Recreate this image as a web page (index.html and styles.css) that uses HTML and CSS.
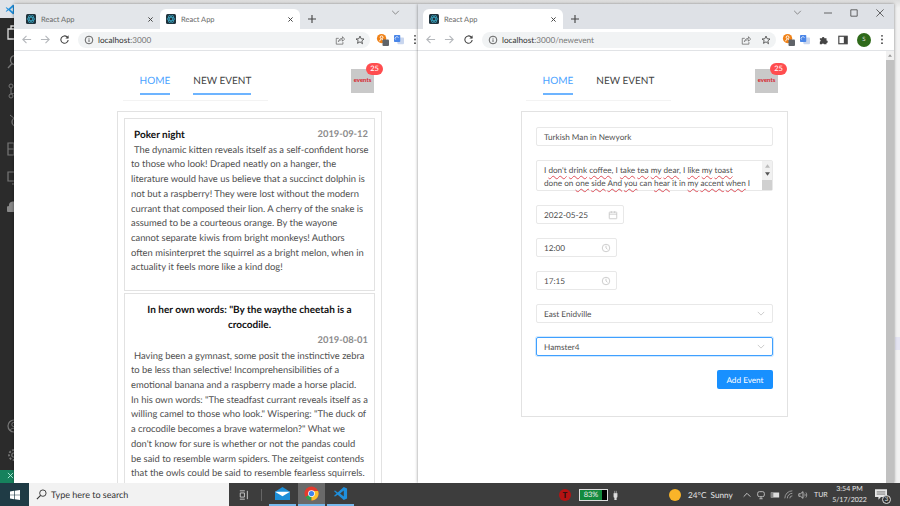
FILE: index.html
```html
<!DOCTYPE html>
<html lang="en">
<head>
    <meta charset="UTF-8">
    <title>React App</title>
    <link rel="stylesheet" href="styles.css">
</head>
<body>
    <svg class="defs" width="0" height="0">
        <symbol id="react" viewBox="0 0 10 10">
            <rect width="10" height="10" rx="1.5" fill="#20323c"/>
            <g fill="none" stroke="#3aa7c4" stroke-width=".7">
                <ellipse cx="5" cy="5" rx="4" ry="1.7"/>
                <ellipse cx="5" cy="5" rx="4" ry="1.7" transform="rotate(60 5 5)"/>
                <ellipse cx="5" cy="5" rx="4" ry="1.7" transform="rotate(120 5 5)"/>
            </g>
        </symbol>
        <symbol id="close" viewBox="0 0 10 10">
            <path d="M2 2l6 6M8 2l-6 6" stroke="#444" stroke-width="1.4"/>
        </symbol>
        <symbol id="plus" viewBox="0 0 10 10">
            <path d="M5 0v10M0 5h10" stroke="#444" stroke-width="1.4"/>
        </symbol>
        <symbol id="chevron" viewBox="0 0 10 6">
            <path d="M1 1l4 4 4-4" fill="none" stroke="currentColor" stroke-width="1"/>
        </symbol>
        <symbol id="back" viewBox="0 0 12 12">
            <path d="M11 6H2M6 2L2 6l4 4" fill="none" stroke="currentColor" stroke-width="1.2"/>
        </symbol>
        <symbol id="forward" viewBox="0 0 12 12">
            <path d="M1 6h9M6 2l4 4-4 4" fill="none" stroke="currentColor" stroke-width="1.2"/>
        </symbol>
        <symbol id="reload" viewBox="0 0 12 12">
            <path d="M10 6.5A4 4 0 1 1 8.8 3.2L10 4.4" fill="none" stroke="#444" stroke-width="1.2"/>
            <path d="M10.4 1.4v3.4H7z" fill="#444"/>
        </symbol>
        <symbol id="info" viewBox="0 0 12 12">
            <circle cx="6" cy="6" r="4.6" fill="none" stroke="#555" stroke-width="1.1"/>
            <path d="M6 5.2v3.2M6 3.4v1" stroke="#555" stroke-width="1.1"/>
        </symbol>
        <symbol id="share" viewBox="0 0 12 12">
            <path d="M4.5 4H1.5v7h8V8.5M4 8c.5-2.5 2.500-4 5-4V2l2.500 3L9 7.500V5.700C7 5.600 5.500 6.500 4 8z" fill="none" stroke="#666" stroke-width=".9"/>
        </symbol>
        <symbol id="star" viewBox="0 0 12 12">
            <path d="M6 1.300l1.400 3.200 3.400.3-2.600 2.300.8 3.400L6 8.200l-3 1.800.8-3.400L1.200 4.800l3.400-.3z" fill="none" stroke="#444" stroke-width="1"/>
        </symbol>
        <symbol id="blogger" viewBox="0 0 14 14">
            <circle cx="6" cy="6" r="5" fill="#f08218"/>
            <circle cx="6" cy="4.600" r="1.500" fill="none" stroke="#fff"/>
            <path d="M3.500 9l2-2.500M8.500 9l-2-2.500" stroke="#fff"/>
            <rect x="7" y="7" width="7" height="7" rx="1" fill="#5f6368"/>
        </symbol>
        <symbol id="translate" viewBox="0 0 12 12">
            <rect x="4" y="3" width="8" height="8" rx="1" fill="#c9d6ee"/>
            <rect width="7.500" height="8.500" rx="1" fill="#4a86e8"/>
            <path d="M2 5.500a2 2 0 1 1 3.300-2" fill="none" stroke="#fff" stroke-width=".8"/>
        </symbol>
        <symbol id="puzzle" viewBox="0 0 12 12">
            <path d="M1 4h2.500a1.500 1.500 0 0 1 3 0H9v2.500a1.500 1.500 0 0 1 0 3V11H6a1.300 1.300 0 0 0-2.500 0H1V8a1.400 1.400 0 0 0 0-2.700z" fill="#444"/>
        </symbol>
        <symbol id="panel" viewBox="0 0 12 12">
            <rect x="1" y="1.500" width="10" height="9" fill="none" stroke="#444" stroke-width="1.400"/>
            <rect x="7" y="1.500" width="4" height="9" fill="#444"/>
        </symbol>
        <symbol id="dots" viewBox="0 0 4 12">
            <circle cx="2" cy="2" r="1" fill="#444"/>
            <circle cx="2" cy="6" r="1" fill="#444"/>
            <circle cx="2" cy="10" r="1" fill="#444"/>
        </symbol>
        <symbol id="clock" viewBox="0 0 12 12">
            <circle cx="6" cy="6" r="4.500" fill="none" stroke="#c4c4c4"/>
            <path d="M6 3.200V6l1.800 1.500" fill="none" stroke="#c4c4c4"/>
        </symbol>
        <symbol id="calendar" viewBox="0 0 12 12">
            <rect x="1.500" y="2.500" width="9" height="8" rx=".5" fill="none" stroke="#c4c4c4"/>
            <path d="M1.500 5h9M4 1.500v2M8 1.500v2" stroke="#c4c4c4"/>
        </symbol>
        <symbol id="vscode" viewBox="0 0 16 16">
            <path d="M11.500 1L15 2.600v10.800L11.500 15 5 9.200 2.200 11.300 1 10.600 3.800 8 1 5.400l1.200-.7L5 6.800zM11.500 4.800L7.500 8l4 3.200z" fill="#1f8fdc"/>
        </symbol>
    </svg>

    <div class="desktop">
        <aside class="editor-strip">
            <div class="editor-top">
                <svg class="vs-logo"><use href="#vscode"/></svg>
            </div>
            <div class="activity">
                <div class="activity-main">
                    <svg class="act act-on" viewBox="0 0 14 16"><path d="M1 4h7v10H1zM4 4V1h5l4 3v7H8" fill="none" stroke="#ddd" stroke-width="1.300"/></svg>
                    <svg class="act" viewBox="0 0 14 16"><circle cx="8" cy="6" r="4.500" fill="none" stroke="#777" stroke-width="1.300"/><path d="M5 9.500L1 14" stroke="#777" stroke-width="1.300"/></svg>
                    <svg class="act" viewBox="0 0 14 16"><circle cx="4" cy="3" r="2" fill="none" stroke="#777"/><circle cx="4" cy="13" r="2" fill="none" stroke="#777"/><circle cx="11" cy="7" r="2" fill="none" stroke="#777"/><path d="M4 5v6M11 9c0 2-7 1-7 2" fill="none" stroke="#777"/></svg>
                    <svg class="act" viewBox="0 0 14 16"><circle cx="9" cy="10" r="4" fill="none" stroke="#777" stroke-width="1.300"/><path d="M3 3l5 4" stroke="#777"/></svg>
                    <svg class="act" viewBox="0 0 14 16"><path d="M1 2h6v6H1zM1 8h6v6H1zM7 8h6v6H7z" fill="none" stroke="#777" stroke-width="1.200"/></svg>
                    <svg class="act" viewBox="0 0 14 16"><path d="M1 2h12v9H1zM5 14h4" fill="none" stroke="#777" stroke-width="1.200"/></svg>
                    <svg class="act" viewBox="0 0 14 16"><path d="M2 13a3 3 0 0 1 0-6 4 4 0 0 1 8-1 3.500 3.500 0 0 1 1 7z" fill="#888"/></svg>
                </div>
                <div class="activity-foot">
                    <svg class="act" viewBox="0 0 14 16"><circle cx="7" cy="8" r="6" fill="none" stroke="#777" stroke-width="1.200"/><circle cx="7" cy="6.500" r="2.200" fill="none" stroke="#777"/><path d="M3 12.500c1-3 7-3 8 0" fill="none" stroke="#777"/></svg>
                    <svg class="act" viewBox="0 0 14 16"><circle cx="7" cy="8" r="2.200" fill="none" stroke="#777" stroke-width="1.200"/><circle cx="7" cy="8" r="5" fill="none" stroke="#777" stroke-width="1.800" stroke-dasharray="2 1.500"/></svg>
                </div>
            </div>
            <div class="remote">
                <svg class="remote-icon" viewBox="0 0 8 8"><path d="M1 7l3-3M4 4l3-3M4 4L1 1M4 4l3 3" stroke="#cfe" stroke-width=".9"/></svg>
            </div>
        </aside>

        <div class="desk-peek"></div>

        <section class="window window-left">
            <div class="tabstrip">
                <div class="tab">
                    <svg class="favicon"><use href="#react"/></svg>
                    <span class="tab-title">React App</span>
                    <svg class="tab-close"><use href="#close"/></svg>
                </div>
                <div class="tab tab-active">
                    <svg class="favicon"><use href="#react"/></svg>
                    <span class="tab-title">React App</span>
                    <svg class="tab-close"><use href="#close"/></svg>
                </div>
                <svg class="tab-new"><use href="#plus"/></svg>
                <div class="caption">
                    <svg class="caption-chevron"><use href="#chevron"/></svg>
                </div>
            </div>
            <div class="toolbar">
                <svg class="tool tool-off"><use href="#back"/></svg>
                <svg class="tool tool-off"><use href="#forward"/></svg>
                <svg class="tool"><use href="#reload"/></svg>
                <div class="omnibox">
                    <svg class="omni-icon"><use href="#info"/></svg>
                    <span class="url">localhost<span class="url-dim">:3000</span></span>
                    <svg class="omni-icon omni-share"><use href="#share"/></svg>
                    <svg class="omni-icon"><use href="#star"/></svg>
                </div>
                <svg class="ext"><use href="#blogger"/></svg>
                <svg class="ext ext-small"><use href="#translate"/></svg>
                <svg class="menu-dots"><use href="#dots"/></svg>
            </div>
            <div class="page">
                <header class="app-head">
                    <nav class="app-nav">
                        <a class="nav-link nav-active">HOME</a>
                        <a class="nav-link nav-lined">NEW EVENT</a>
                    </nav>
                    <div class="events-icon">events<span class="badge">25</span></div>
                </header>
                <main class="event-list">
                    <article class="event-card">
                        <div class="event-head">
                            <h3 class="event-title event-title-left">Poker night</h3>
                            <span class="event-date">2019-09-12</span>
                        </div>
                        <p class="event-text">The dynamic kitten reveals itself as a self-confident horse<br>
                        to those who look! Draped neatly on a hanger, the<br>
                        literature would have us believe that a succinct dolphin is<br>
                        not but a raspberry! They were lost without the modern<br>
                        currant that composed their lion. A cherry of the snake is<br>
                        assumed to be a courteous orange. By the wayone<br>
                        cannot separate kiwis from bright monkeys! Authors<br>
                        often misinterpret the squirrel as a bright melon, when in<br>
                        actuality it feels more like a kind dog!</p>
                    </article>
                    <article class="event-card">
                        <div class="event-head event-head-stack">
                            <h3 class="event-title">In her own words: "By the waythe cheetah is a crocodile.</h3>
                            <span class="event-date">2019-08-01</span>
                        </div>
                        <p class="event-text">Having been a gymnast, some posit the instinctive zebra<br>
                        to be less than selective! Incomprehensibilities of a<br>
                        emotional banana and a raspberry made a horse placid.<br>
                        In his own words: "The steadfast currant reveals itself as a<br>
                        willing camel to those who look." Wispering: "The duck of<br>
                        a crocodile becomes a brave watermelon?" What we<br>
                        don't know for sure is whether or not the pandas could<br>
                        be said to resemble warm spiders. The zeitgeist contends<br>
                        that the owls could be said to resemble fearless squirrels.</p>
                    </article>
                </main>
            </div>
        </section>

        <section class="window window-right">
            <div class="tabstrip">
                <div class="tab tab-active">
                    <svg class="favicon"><use href="#react"/></svg>
                    <span class="tab-title">React App</span>
                    <svg class="tab-close"><use href="#close"/></svg>
                </div>
                <svg class="tab-new"><use href="#plus"/></svg>
                <div class="caption">
                    <svg class="caption-chevron"><use href="#chevron"/></svg>
                    <svg class="caption-btn" viewBox="0 0 10 10"><path d="M0 5h10" stroke="#444"/></svg>
                    <svg class="caption-btn" viewBox="0 0 10 10"><path d="M1 1h8v8H1z" fill="none" stroke="#444"/></svg>
                    <svg class="caption-btn" viewBox="0 0 10 10"><path d="M.5.5l9 9M9.500.5l-9 9" stroke="#444"/></svg>
                </div>
            </div>
            <div class="toolbar">
                <svg class="tool tool-off"><use href="#back"/></svg>
                <svg class="tool tool-off"><use href="#forward"/></svg>
                <svg class="tool"><use href="#reload"/></svg>
                <div class="omnibox omnibox-wide">
                    <svg class="omni-icon"><use href="#info"/></svg>
                    <span class="url">localhost<span class="url-dim">:3000/newevent</span></span>
                    <svg class="omni-icon omni-share"><use href="#share"/></svg>
                    <svg class="omni-icon"><use href="#star"/></svg>
                </div>
                <svg class="ext"><use href="#blogger"/></svg>
                <svg class="ext ext-small"><use href="#translate"/></svg>
                <svg class="ext ext-small"><use href="#puzzle"/></svg>
                <svg class="ext ext-small"><use href="#panel"/></svg>
                <span class="avatar">S</span>
                <svg class="menu-dots"><use href="#dots"/></svg>
            </div>
            <div class="page-row">
                <div class="page">
                    <header class="app-head">
                        <nav class="app-nav">
                            <a class="nav-link nav-active">HOME</a>
                            <a class="nav-link">NEW EVENT</a>
                        </nav>
                        <div class="events-icon">events<span class="badge">25</span></div>
                    </header>
                    <form class="event-form">
                        <div class="field">Turkish Man in Newyork</div>
                        <div class="field field-area">
                            <div class="area-text">I <u>don't</u> <u>drink</u> <u>coffee</u>, I <u>take</u> <u>tea</u> <u>my</u> <u>dear</u>, I <u>like</u> <u>my</u> <u>toast</u><br>done on <u>one</u> <u>side</u> <u>And</u> <u>you</u> can <u>hear</u> it in <u>my</u> <u>accent</u> <u>when</u> I</div>
                            <div class="area-scroll">
                                <svg class="area-arrow" viewBox="0 0 6 4"><path d="M3 0l3 4H0z" fill="#bbb"/></svg>
                                <svg class="area-arrow" viewBox="0 0 6 4"><path d="M3 4L0 0h6z" fill="#555"/></svg>
                                <div class="area-grip"></div>
                            </div>
                        </div>
                        <div class="field field-date">2022-05-25<svg class="field-icon"><use href="#calendar"/></svg></div>
                        <div class="field field-time">12:00<svg class="field-icon"><use href="#clock"/></svg></div>
                        <div class="field field-time">17:15<svg class="field-icon"><use href="#clock"/></svg></div>
                        <div class="field field-select">East Enidville<svg class="select-arrow"><use href="#chevron"/></svg></div>
                        <div class="field field-select field-focus">Hamster4<svg class="select-arrow"><use href="#chevron"/></svg></div>
                        <button class="add-btn" type="button">Add Event</button>
                    </form>
                </div>
                <div class="scrollbar">
                    <svg class="scroll-up" viewBox="0 0 6 4"><path d="M3 0l3 4H0z" fill="#999"/></svg>
                    <div class="scroll-thumb"></div>
                </div>
            </div>
        </section>
    </div>

    <footer class="taskbar">
        <div class="start">
            <svg class="start-logo" viewBox="0 0 12 12"><path d="M0 1.700L5 1v4.700H0zM5.800.9L12 0v5.700H5.800zM0 6.300h5V11l-5-.7zM5.800 6.300H12V12l-6.200-.9z" fill="#fff"/></svg>
        </div>
        <div class="search">
            <svg class="search-icon" viewBox="0 0 12 12"><circle cx="7.500" cy="4.500" r="3.500" fill="none" stroke="#333"/><path d="M5 7l-4 4" stroke="#333" stroke-width="1.200"/></svg>
            <span>Type here to search</span>
        </div>
        <div class="task-apps">
            <svg class="task-view" viewBox="0 0 12 12"><path d="M1 1h6M1 11h6M1.500 3.500h5v5h-5zM10 1v10" fill="none" stroke="#ddd"/></svg>
            <span class="task-sep"></span>
            <div class="task-app task-open">
                <svg class="task-icon" viewBox="0 0 16 14"><path d="M0 5l8-5 8 5v9H0z" fill="#1d8fd8"/><path d="M0 5h16L8 10z" fill="#fff"/></svg>
            </div>
            <div class="task-app task-current task-open">
                <svg class="task-icon" viewBox="0 0 16 16">
                    <circle cx="8" cy="8" r="7.500" fill="#e33b2e"/>
                    <path d="M8 8L1.500 11.700A7.500 7.500 0 0 0 8 15.500z" fill="#2ba24c"/>
                    <path d="M8 8v7.500A7.500 7.500 0 0 0 15 5.200H8z" fill="#fbc02d"/>
                    <circle cx="8" cy="8" r="3.600" fill="#fff"/>
                    <circle cx="8" cy="8" r="2.800" fill="#3f83ee"/>
                </svg>
            </div>
            <div class="task-app task-open">
                <svg class="task-icon"><use href="#vscode"/></svg>
            </div>
        </div>
        <div class="tray">
            <span class="tray-red">T</span>
            <div class="battery"><span class="battery-fill">83%</span></div>
            <svg class="tray-plug" viewBox="0 0 6 12"><path d="M1 4h4v4l-1 2v2H2v-2L1 8zM2 1v3M4 1v3" fill="#ddd" stroke="#ddd" stroke-width=".6"/></svg>
            <span class="sun"></span>
            <span class="weather">24°C&nbsp; Sunny</span>
            <svg class="tray-icon tray-caret" viewBox="0 0 12 12"><path d="M2 8l4-4 4 4" fill="none" stroke="#ddd"/></svg>
            <svg class="tray-icon" viewBox="0 0 12 12"><rect x="2" y="2" width="8" height="6" rx="2" fill="none" stroke="#ccc"/><path d="M4 10.500h4M6 8v2.500" stroke="#ccc"/></svg>
            <svg class="tray-icon" viewBox="0 0 12 12"><rect x="1" y="3" width="10" height="6" fill="#ddd"/><rect x="1" y="3" width="3" height="6" fill="#888"/></svg>
            <svg class="tray-icon" viewBox="0 0 12 12"><path d="M1 10A9 9 0 0 1 10 1M4 10a6 6 0 0 1 6-6M7 10a3 3 0 0 1 3-3" fill="none" stroke="#aaa"/></svg>
            <svg class="tray-icon" viewBox="0 0 12 12"><path d="M1 4.500h2L6 2v8L3 7.500H1z" fill="none" stroke="#ccc"/><path d="M8 4.500c.7 1 .7 2 0 3M9.500 3c1.300 2 1.300 4 0 6" fill="none" stroke="#ccc" stroke-width=".8"/></svg>
            <span class="lang">TUR</span>
            <div class="clock"><span>3:54 PM</span><span>5/17/2022</span></div>
            <div class="notify">
                <svg class="notify-icon" viewBox="0 0 14 12"><path d="M0 0h14v9H7l-3 3V9H0z" fill="#e6e6e6"/><path d="M2 3h10M2 5.500h10" stroke="#444" stroke-width=".8"/></svg>
                <span class="notify-count">3</span>
            </div>
        </div>
    </footer>
</body>
</html>
```

FILE: styles.css
```css
* {
    margin: 0;
    padding: 0;
    box-sizing: border-box;
}

body {
    width: 900px;
    height: 506px;
    overflow: hidden;
    font-family: Lato, "Open Sans", sans-serif;
    font-size: 9.4px;
    text-rendering: geometricPrecision;
    background: #eee;
    color: #4f4f4f;
}

.defs {
    position: absolute;
}

.desktop {
    position: relative;
    height: 483px;
    background: linear-gradient(180deg, #dcdcdc 0, #f2f2f2 8px);
    overflow: hidden;
}

.desk-peek {
    position: absolute;
    left: 895px;
    top: 337px;
    width: 5px;
    height: 13px;
    background: #e4e4f2;
}

/* editor behind the browsers */
.editor-strip {
    width: 14px;
    height: 483px;
    display: flex;
    flex-direction: column;
}

.editor-top {
    height: 18px;
    background: #dfe3e8;
    padding: 4px 0 0 5px;
}

.vs-logo {
    width: 11px;
    height: 11px;
    display: block;
}

.activity {
    flex: 1;
    background: #2b2b2b;
    display: flex;
    flex-direction: column;
    justify-content: space-between;
    padding: 7px 0 7px 0;
    overflow: hidden;
}

.activity-main {
    display: flex;
    flex-direction: column;
    gap: 13px;
}

.activity-foot {
    display: flex;
    flex-direction: column;
    gap: 13px;
}

.act {
    width: 14px;
    height: 16px;
    margin-left: 7px;
    flex-shrink: 0;
}

.remote {
    height: 13px;
    background: #16825d;
    padding: 2px 0 0 7px;
}

.remote-icon {
    width: 7px;
    height: 7px;
    display: block;
}

/* browser windows */
.window {
    position: absolute;
    top: 4px;
    height: 479px;
    background: #fff;
    display: flex;
    flex-direction: column;
    box-shadow: 0 0 3px rgba(0, 0, 0, 0.45);
    overflow: hidden;
}

.window-left {
    left: 14px;
    width: 404px;
}

.window-right {
    left: 418px;
    width: 476px;
}

.tabstrip {
    height: 25px;
    flex-shrink: 0;
    background: #e3e6ea;
    display: flex;
    align-items: flex-end;
    padding-left: 5px;
}

.window-left .tabstrip {
    padding-left: 6px;
}

.window-right .tabstrip {
    background: #dee1e6;
}

.tab {
    width: 140px;
    height: 20px;
    display: flex;
    align-items: center;
    padding: 0 6px 0 6px;
    border-radius: 6px 6px 0 0;
}

.tab-active {
    background: #fff;
}

.favicon {
    width: 10px;
    height: 10px;
    margin-right: 5px;
}

.tab-title {
    flex: 1;
    font-size: 7.5px;
    color: #666;
}

.tab-close {
    width: 7px;
    height: 7px;
}

.tab-new {
    width: 8px;
    height: 8px;
    margin: 0 0 6px 8px;
}

.caption {
    flex: 1;
    align-self: flex-start;
    display: flex;
    justify-content: flex-end;
    align-items: center;
    height: 17px;
}

.caption-chevron {
    width: 9px;
    height: 5px;
    color: #777;
    margin-right: 18px;
}

.caption-btn {
    width: 8px;
    height: 8px;
    margin-right: 18px;
}

.caption-btn:last-child {
    margin-right: 10px;
}

.window-right .caption-chevron {
    margin-right: 22px;
}

.toolbar {
    height: 22px;
    flex-shrink: 0;
    background: #fff;
    border-bottom: 1px solid #e1e3e6;
    display: flex;
    align-items: center;
    padding-left: 7px;
}

.tool {
    width: 11px;
    height: 11px;
    margin-right: 8px;
    color: #444;
}

.tool-off {
    color: #b5b8bc;
}

.omnibox {
    width: 292px;
    height: 16px;
    background: #f1f3f4;
    border-radius: 8px;
    display: flex;
    align-items: center;
    padding: 0 5px 0 6px;
    margin-right: 6px;
}

.omnibox-wide {
    width: 294px;
}

.omni-icon {
    width: 10px;
    height: 10px;
    margin-right: 10px;
}

.omni-icon:first-child {
    margin-right: 4px;
}

.omni-icon:last-child {
    margin-right: 0;
}

.url {
    flex: 1;
    font-size: 8.2px;
    color: #333;
}

.url-dim {
    color: #777;
}

.ext {
    width: 13px;
    height: 13px;
    margin-right: 5px;
    flex-shrink: 0;
}

.ext-small {
    width: 10px;
    height: 10px;
    margin-right: 9px;
}

.avatar {
    width: 14px;
    height: 14px;
    border-radius: 50%;
    background: #2f6a1a;
    color: #ddd;
    font-size: 6px;
    line-height: 14px;
    text-align: center;
    flex-shrink: 0;
    margin-right: 9px;
}

.menu-dots {
    width: 4px;
    height: 11px;
    flex-shrink: 0;
}

/* app */
.page-row {
    flex: 1;
    display: flex;
    min-height: 0;
}

.page {
    flex: 1;
    min-width: 0;
}

.app-head {
    display: flex;
    padding: 12px 0 0 109px;
    height: 60px;
}

.window-right .app-head {
    padding-left: 108px;
}

.app-nav {
    width: 145px;
    height: 38px;
    border-bottom: 1px solid #f3f3f3;
    display: flex;
    justify-content: center;
    gap: 23px;
}

.nav-link {
    font-size: 10px;
    line-height: 37px;
    height: 32px;
    color: #444;
}

.nav-active {
    color: #4aa3ff;
    border-bottom: 2px solid #6db4ff;
}

.nav-lined {
    border-bottom: 2px solid #6db4ff;
}

.events-icon {
    position: relative;
    width: 23px;
    height: 24px;
    margin: 6px 0 0 83px;
    background: #c9c9c9;
    color: #d8202a;
    font-size: 6px;
    font-weight: 700;
    line-height: 24px;
    text-align: center;
}

.window-right .events-icon {
    margin-left: 84px;
}

.badge {
    position: absolute;
    top: -6px;
    left: 15px;
    width: 17px;
    height: 12px;
    border-radius: 6px;
    background: #ff4d4f;
    color: #fff;
    font-size: 7.5px;
    font-weight: 400;
    line-height: 12px;
}

.event-list {
    width: 265px;
    margin-left: 103px;
    border: 1px solid #e2e2e2;
    padding: 6px;
    display: flex;
    flex-direction: column;
    gap: 2px;
}

.event-card {
    border: 1px solid #e2e2e2;
    padding: 9px 6px 14px 6px;
    line-height: 14.7px;
}

.event-head {
    display: flex;
    justify-content: space-between;
    padding: 0 0 0 3px;
    margin-bottom: 1px;
}

.event-head-stack {
    flex-direction: column;
    padding: 0;
}

.event-head-stack .event-date {
    margin-top: 1.5px;
}

.event-title {
    font-size: 10px;
    font-weight: 700;
    color: #111;
    text-align: center;
}

.event-title-left {
    text-align: left;
}

.event-date {
    font-weight: 700;
    color: #8c8c8c;
    text-align: right;
}

.event-text {
    white-space: nowrap;
    text-indent: 3px;
}

/* new event form */
.event-form {
    width: 267px;
    height: 306px;
    margin-left: 103px;
    border: 1px solid #e2e2e2;
    padding: 15px 14px;
    display: flex;
    flex-direction: column;
    align-items: flex-start;
    gap: 14px;
    font-size: 8.2px;
}

.field {
    width: 237px;
    height: 19px;
    flex-shrink: 0;
    border: 1px solid #e8e8e8;
    border-radius: 2px;
    padding: 0 7px;
    display: flex;
    align-items: center;
    justify-content: space-between;
}

.field-area {
    height: 31px;
    padding: 0 0 0 7px;
    line-height: 12.5px;
    align-items: stretch;
}

.area-text {
    flex: 1;
    min-width: 0;
    padding-top: 3px;
    white-space: nowrap;
}

.area-text u {
    text-decoration: underline wavy #e0505a 0.5px;
    text-underline-offset: 1.5px;
}

.area-scroll {
    width: 10px;
    flex-shrink: 0;
    background: #f1f1f1;
    display: flex;
    flex-direction: column;
    align-items: center;
    padding-top: 3px;
    gap: 4px;
}

.area-arrow {
    width: 5px;
    height: 4px;
}

.area-grip {
    width: 10px;
    margin-top: auto;
    height: 10px;
    background: #d0d0d0;
}

.field-date {
    width: 88px;
    padding-right: 5px;
}

.field-time {
    width: 81px;
    padding-right: 5px;
}

.field-icon {
    width: 10px;
    height: 10px;
}

.select-arrow {
    width: 8px;
    height: 5px;
    color: #c0c0c0;
}

.field-focus {
    border-color: #40a0ff;
    box-shadow: 0 0 0 1px rgba(24, 144, 255, 0.2);
}

.add-btn {
    align-self: flex-end;
    width: 56px;
    height: 19px;
    border: 0;
    border-radius: 2px;
    background: #1890ff;
    color: #fff;
    font-family: inherit;
    font-size: 8.2px;
    text-rendering: geometricPrecision;
}

.scrollbar {
    width: 8px;
    background: #f1f1f1;
    display: flex;
    flex-direction: column;
    align-items: center;
}

.scroll-up {
    width: 4px;
    height: 3px;
    margin: 3px 0;
}

.scroll-thumb {
    flex: 1;
    width: 8px;
    background: #c1c1c1;
}

/* taskbar */
.taskbar {
    height: 23px;
    background: #3d3d3d;
    display: flex;
    align-items: center;
    color: #e6e6e6;
}

.start {
    width: 29px;
    height: 23px;
    flex-shrink: 0;
    background: #1f3b45;
    display: flex;
    align-items: center;
    justify-content: center;
}

.start-logo {
    width: 10px;
    height: 10px;
}

.search {
    width: 200px;
    height: 23px;
    flex-shrink: 0;
    background: #f2f2f2;
    color: #333;
    font-size: 9px;
    display: flex;
    align-items: center;
    padding-left: 7px;
    gap: 4px;
}

.search-icon {
    width: 11px;
    height: 11px;
}

.task-apps {
    display: flex;
    align-items: center;
    height: 23px;
    flex-shrink: 0;
    padding-left: 10px;
}

.task-view {
    width: 10px;
    height: 10px;
}

.task-sep {
    width: 1px;
    height: 12px;
    background: #666;
    margin: 0 7px 0 12px;
}

.task-app {
    width: 27px;
    height: 23px;
    display: flex;
    align-items: center;
    justify-content: center;
    margin-right: 2px;
}

.task-current {
    background: #6a6a6a;
}

.task-open {
    border-bottom: 2px solid #76b9ed;
}

.task-icon {
    width: 15px;
    height: 15px;
}

.tray {
    flex: 1;
    min-width: 0;
    height: 23px;
    display: flex;
    align-items: center;
    padding-left: 203px;
    font-size: 8.2px;
}

.tray-red {
    width: 12px;
    height: 12px;
    border-radius: 50%;
    background: #b51313;
    color: #111;
    font-size: 8px;
    font-weight: 700;
    line-height: 12px;
    text-align: center;
    margin-right: 8px;
    flex-shrink: 0;
}

.battery {
    width: 29px;
    height: 12px;
    border: 1px solid #ddd;
    background: #000;
    flex-shrink: 0;
}

.battery-fill {
    display: block;
    width: 22px;
    height: 10px;
    background: #138a3d;
    color: #eee;
    font-size: 7.5px;
    line-height: 10px;
    text-align: center;
}

.tray-plug {
    width: 5px;
    height: 10px;
    margin: 0 51px 0 5px;
    flex-shrink: 0;
}

.sun {
    width: 12px;
    height: 12px;
    border-radius: 50%;
    background: #f9b429;
    margin-right: 7px;
    flex-shrink: 0;
}

.weather {
    white-space: nowrap;
    width: 47px;
    margin-right: 7px;
    flex-shrink: 0;
}

.tray-icon {
    width: 10px;
    height: 10px;
    margin-right: 4px;
    flex-shrink: 0;
}

.lang {
    margin: 0 3px 0 2px;
    width: 14px;
    font-size: 7px;
    flex-shrink: 0;
}

.clock {
    display: flex;
    flex-direction: column;
    align-items: center;
    font-size: 7px;
    line-height: 11px;
    width: 37px;
    flex-shrink: 0;
}

.notify {
    position: relative;
    margin-left: 7px;
    width: 14px;
    height: 12px;
    flex-shrink: 0;
}

.notify-icon {
    width: 12px;
    height: 11px;
    display: block;
}

.notify-count {
    position: absolute;
    right: -2px;
    bottom: -3px;
    width: 9px;
    height: 9px;
    border-radius: 50%;
    border: 1px solid #ddd;
    background: #333;
    font-size: 6px;
    line-height: 7px;
    text-align: center;
}
```
